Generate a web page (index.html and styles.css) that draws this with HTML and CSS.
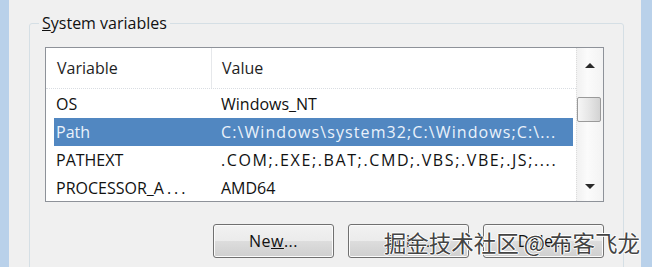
FILE: index.html
```html
<!DOCTYPE html>
<html>

<head>
    <link rel="stylesheet" href="styles.css">
</head>

<body>
    <div class="window">
        <div class="edge"></div>
        <div class="content">
            <fieldset class="group">
                <legend><u>S</u>ystem variables</legend>
                <div class="listbox">
                    <div class="table">
                        <div class="head">
                            <div class="col first">Variable</div>
                            <div class="col">Value</div>
                        </div>
                        <div class="row">
                            <div class="cell">OS</div>
                            <div class="cell">Windows_NT</div>
                        </div>
                        <div class="row selected">
                            <div class="cell">Path</div>
                            <div class="cell wide">C:\Windows\system32;C:\Windows;C:\...</div>
                        </div>
                        <div class="row">
                            <div class="cell">PATHEXT</div>
                            <div class="cell wider">.COM;.EXE;.BAT;.CMD;.VBS;.VBE;.JS;....</div>
                        </div>
                        <div class="row">
                            <div class="cell">PROCESSOR_A<span class="dots">...</span></div>
                            <div class="cell">AMD64</div>
                        </div>
                    </div>
                    <div class="scrollbar">
                        <div class="arrow up"><span></span></div>
                        <div class="thumb"></div>
                        <div class="arrow down"><span></span></div>
                    </div>
                </div>
                <div class="buttons">
                    <button>Ne<u>w</u>...</button>
                    <button><u>E</u>dit...</button>
                    <button>De<u>l</u>ete</button>
                </div>
            </fieldset>
        </div>
        <div class="edge right"></div>
    </div>
    <div class="watermark">掘金技术社区 @ 布客飞龙</div>
</body>

</html>
```

FILE: styles.css
```css
* {
    margin: 0;
    padding: 0;
    box-sizing: border-box;
}

body {
    background-color: #f0f0f0;
    font-family: "Open Sans", "Noto Sans", sans-serif;
    font-size: 16px;
    color: #111;
    overflow: hidden;
}

.window {
    display: flex;
    height: 267px;
    overflow: hidden;
}

.edge {
    width: 9px;
    background-color: #b9d1ea;
}

.edge.right {
    width: 11px;
}

.content {
    flex: 1;
    padding: 12px 17px 0 20px;
}

.group {
    border: 1px solid #d5dfe5;
    border-radius: 3px;
    padding: 13px 18px 14px 15px;
}

.group legend {
    line-height: 22px;
    padding: 0 3px;
    margin-left: -6px;
    color: #111;
}

.listbox {
    display: flex;
    width: 559px;
    height: 155px;
    border: 1px solid #8e9299;
    background-color: #fff;
}

.table {
    flex: 1;
    overflow: hidden;
}

.head {
    display: grid;
    grid-template-columns: 166px 1fr;
    height: 41px;
    border-bottom: 1px dotted #d9dde2;
    margin-bottom: 1px;
}

.head .col {
    padding-left: 10px;
    line-height: 40px;
    color: #1e1e1e;
}

.head .first {
    padding-left: 11px;
    border-right: 1px solid #e6e8eb;
}

.row {
    display: grid;
    grid-template-columns: 157px 1fr;
    height: 28px;
    line-height: 28px;
    margin: 0 3px 0 8px;
    white-space: nowrap;
}

.row .cell {
    overflow: hidden;
    padding-left: 2px;
}

.row .cell + .cell {
    padding-left: 10px;
}

/* punctuation in the original renders wider */
.row .wide {
    letter-spacing: 1.1px;
}

.row .wider {
    letter-spacing: 1.6px;
}

.dots {
    letter-spacing: 3px;
    margin-left: 3px;
}

.row.selected {
    background-color: #5187c1;
    color: #eaf2fb;
}

.scrollbar {
    width: 27px;
    display: flex;
    flex-direction: column;
    align-items: center;
    border-left: 1px dotted #dcdcdc;
    background: linear-gradient(to right, #f1f1f1, #fbfbfb 40%, #f3f3f3);
}

.arrow {
    height: 34px;
    width: 100%;
    display: flex;
    align-items: center;
    justify-content: center;
}

.arrow span {
    width: 0;
    height: 0;
    border-left: 5px solid transparent;
    border-right: 5px solid transparent;
}

.up span {
    border-bottom: 5px solid #2a2a2a;
}

.down {
    margin-top: auto;
    height: 30px;
}

.down span {
    border-top: 5px solid #2a2a2a;
}

.thumb {
    width: 24px;
    height: 25px;
    margin-top: 15px;
    margin-right: 2px;
    border: 1px solid #9a9a9a;
    border-radius: 2px;
    background: linear-gradient(to right, #f6f6f6, #e6e6e6 50%, #d3d3d3);
}

.buttons {
    display: flex;
    justify-content: flex-end;
    gap: 14px;
    width: 559px;
    margin-top: 22px;
}

.buttons button {
    width: 121px;
    height: 34px;
    border: 1px solid #707070;
    border-radius: 3px;
    background: linear-gradient(#f2f2f2, #ebebeb 50%, #dddddd 50%, #cfcfcf);
    box-shadow: inset 0 0 0 1px #fbfbfb;
    font-family: inherit;
    font-size: 16px;
    letter-spacing: 0.5px;
    color: #111;
}

.watermark {
    position: absolute;
    top: 227px;
    right: 12px;
    font-family: "Noto Sans CJK SC", sans-serif;
    font-size: 22.5px;
    line-height: 30px;
    color: #444;
    text-shadow: 1px 0 #fff, -1px 0 #fff, 0 1px #fff, 0 -1px #fff;
}
```
